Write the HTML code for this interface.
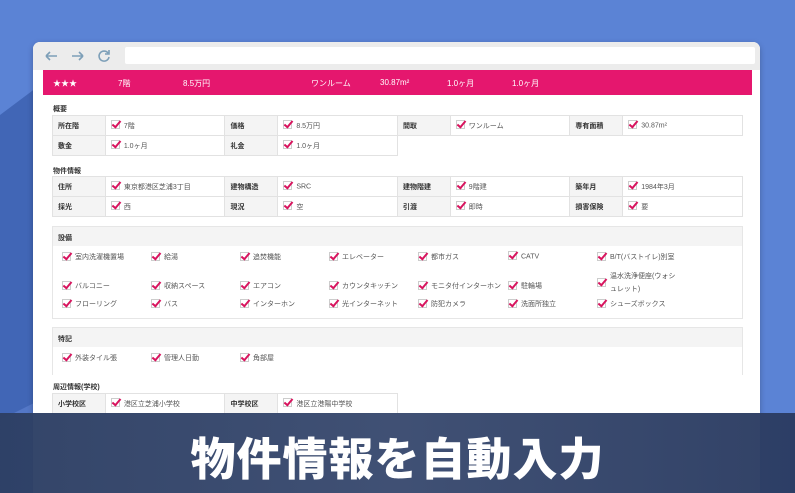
<!DOCTYPE html>
<html style="width:795px;height:493px;overflow:hidden"><head><meta charset="utf-8"><style>
*{margin:0;padding:0;box-sizing:border-box}
body{width:795px;height:493px;overflow:hidden;background:#5b83d5;font-family:"Liberation Sans","Noto Sans CJK JP",sans-serif;position:relative;color:#444}
.abs{position:absolute}
.win{left:33px;top:42px;width:727px;height:451px;background:#fff;border-radius:7px 7px 0 0;overflow:hidden;box-shadow:0 2px 6px rgba(0,0,0,.25)}
.tb{left:0;top:0;width:727px;height:28px;background:#ececec}
.addr{left:92px;top:5px;width:630px;height:17px;background:#fff;border-radius:2px}
.pink{left:10px;top:28px;width:709px;height:25px;background:#e5176e;color:#fff;font-size:8px}
.pink span{position:absolute;top:8px}
.t{font-size:7px;font-weight:bold;color:#333}
table{border-collapse:collapse;position:absolute;font-size:7px}
td{border:1px solid #e2e2e2;height:20px;padding:0 0 0 5px;color:#555}
td.l{background:#f4f4f4;font-weight:bold;color:#333;width:53px}
td.v{width:120px}
.cb{display:inline-block;width:9px;height:9px;border:1px solid #ccc;vertical-align:middle;margin-right:4px;position:relative;top:-1px}
.cb:after{content:"";position:absolute;left:2px;top:-2px;width:3px;height:7px;border:solid #d8145e;border-width:0 2px 2px 0;transform:rotate(40deg)}
.box{border:1px solid #e6e6e6;background:#fff}
.bh{background:#f4f4f4;height:19px;font-size:7px;font-weight:bold;color:#333;padding:6px 5px}
.it{position:absolute;font-size:7px;color:#555;white-space:nowrap}
.band{left:0;top:413px;width:795px;height:80px;background:linear-gradient(90deg,#2d3f64,#3a4b70 50%,#2b3c62);opacity:.97}
.big{left:0;top:423px;width:795px;text-align:center;color:#fff;font-size:45px;font-weight:900;letter-spacing:1px;font-family:"Noto Sans CJK JP",sans-serif}
</style></head><body>
<svg class="abs" style="left:0;top:0" width="795" height="493"><polygon points="0,115 40,85 40,493 0,493" fill="#4166b6"/><polygon points="0,420 40,400 40,493 0,493" fill="#5478c8"/></svg>
<div class="abs win">
 <div class="abs tb">
  <svg class="abs" style="left:10px;top:6px" width="70" height="16" fill="none" stroke="#7d9fb8" stroke-width="1.6"><path d="M3 8h11M3 8l4-4M3 8l4 4"/><path d="M29 8h11M40 8l-4-4M40 8l-4 4"/><path d="M65 5a5 5 0 1 0 1 4M66 2v4h-4"/></svg>
  <div class="abs addr"></div>
 </div>
 <div class="abs pink"><span style="left:10px">★★★</span><span style="left:75px">7階</span><span style="left:140px">8.5万円</span><span style="left:268px">ワンルーム</span><span style="left:337px">30.87m²</span><span style="left:404px">1.0ヶ月</span><span style="left:469px">1.0ヶ月</span></div>
</div>
<div class="abs t" style="left:53px;top:104px">概要</div>
<table style="left:52px;top:115px;width:691px"><tr><td class="l">所在階</td><td class="v"><i class="cb"></i>7階</td><td class="l">価格</td><td class="v"><i class="cb"></i>8.5万円</td><td class="l">間取</td><td class="v"><i class="cb"></i>ワンルーム</td><td class="l">専有面積</td><td class="v"><i class="cb"></i>30.87m²</td></tr>
<tr><td class="l">敷金</td><td class="v"><i class="cb"></i>1.0ヶ月</td><td class="l">礼金</td><td class="v"><i class="cb"></i>1.0ヶ月</td><td style="border:0" colspan="4"></td></tr></table>
<div class="abs t" style="left:53px;top:166px">物件情報</div>
<table style="left:52px;top:176px;width:691px"><tr><td class="l">住所</td><td class="v"><i class="cb"></i>東京都港区芝浦3丁目</td><td class="l">建物構造</td><td class="v"><i class="cb"></i>SRC</td><td class="l">建物階建</td><td class="v"><i class="cb"></i>9階建</td><td class="l">築年月</td><td class="v"><i class="cb"></i>1984年3月</td></tr>
<tr><td class="l">採光</td><td class="v"><i class="cb"></i>西</td><td class="l">現況</td><td class="v"><i class="cb"></i>空</td><td class="l">引渡</td><td class="v"><i class="cb"></i>即時</td><td class="l">損害保険</td><td class="v"><i class="cb"></i>要</td></tr></table>
<div class="abs box" style="left:52px;top:226px;width:691px;height:93px"><div class="bh">設備</div></div>
<div class="it" style="left:62px;top:252px"><i class="cb"></i>室内洗濯機置場</div>
<div class="it" style="left:151px;top:252px"><i class="cb"></i>給湯</div>
<div class="it" style="left:240px;top:252px"><i class="cb"></i>追焚機能</div>
<div class="it" style="left:329px;top:252px"><i class="cb"></i>エレベーター</div>
<div class="it" style="left:418px;top:252px"><i class="cb"></i>都市ガス</div>
<div class="it" style="left:508px;top:252px"><i class="cb"></i>CATV</div>
<div class="it" style="left:597px;top:252px"><i class="cb"></i>B/T(バストイレ)別室</div>
<div class="it" style="left:62px;top:281px"><i class="cb"></i>バルコニー</div>
<div class="it" style="left:151px;top:281px"><i class="cb"></i>収納スペース</div>
<div class="it" style="left:240px;top:281px"><i class="cb"></i>エアコン</div>
<div class="it" style="left:329px;top:281px"><i class="cb"></i>カウンタキッチン</div>
<div class="it" style="left:418px;top:281px"><i class="cb"></i>モニタ付インターホン</div>
<div class="it" style="left:508px;top:281px"><i class="cb"></i>駐輪場</div>
<div class="it" style="left:597px;top:270px;line-height:13px"><i class="cb" style="position:absolute;top:8px"></i><span style="display:inline-block;margin-left:13px">温水洗浄便座(ウォシ<br>ュレット)</span></div>
<div class="it" style="left:62px;top:299px"><i class="cb"></i>フローリング</div>
<div class="it" style="left:151px;top:299px"><i class="cb"></i>バス</div>
<div class="it" style="left:240px;top:299px"><i class="cb"></i>インターホン</div>
<div class="it" style="left:329px;top:299px"><i class="cb"></i>光インターネット</div>
<div class="it" style="left:418px;top:299px"><i class="cb"></i>防犯カメラ</div>
<div class="it" style="left:508px;top:299px"><i class="cb"></i>洗面所独立</div>
<div class="it" style="left:597px;top:299px"><i class="cb"></i>シューズボックス</div>
<div class="abs box" style="left:52px;top:327px;width:691px;height:48px;border-bottom:0"><div class="bh">特記</div></div>
<div class="it" style="left:62px;top:353px"><i class="cb"></i>外装タイル張</div>
<div class="it" style="left:151px;top:353px"><i class="cb"></i>管理人日勤</div>
<div class="it" style="left:240px;top:353px"><i class="cb"></i>角部屋</div>
<div class="abs t" style="left:53px;top:382px">周辺情報(学校)</div>
<table style="left:52px;top:393px;width:346px"><tr><td class="l">小学校区</td><td class="v"><i class="cb"></i>港区立芝浦小学校</td><td class="l">中学校区</td><td class="v"><i class="cb"></i>港区立港陽中学校</td></tr></table>
<div class="abs band"></div>
<div class="abs big">物件情報を自動入力</div>
</body></html>
